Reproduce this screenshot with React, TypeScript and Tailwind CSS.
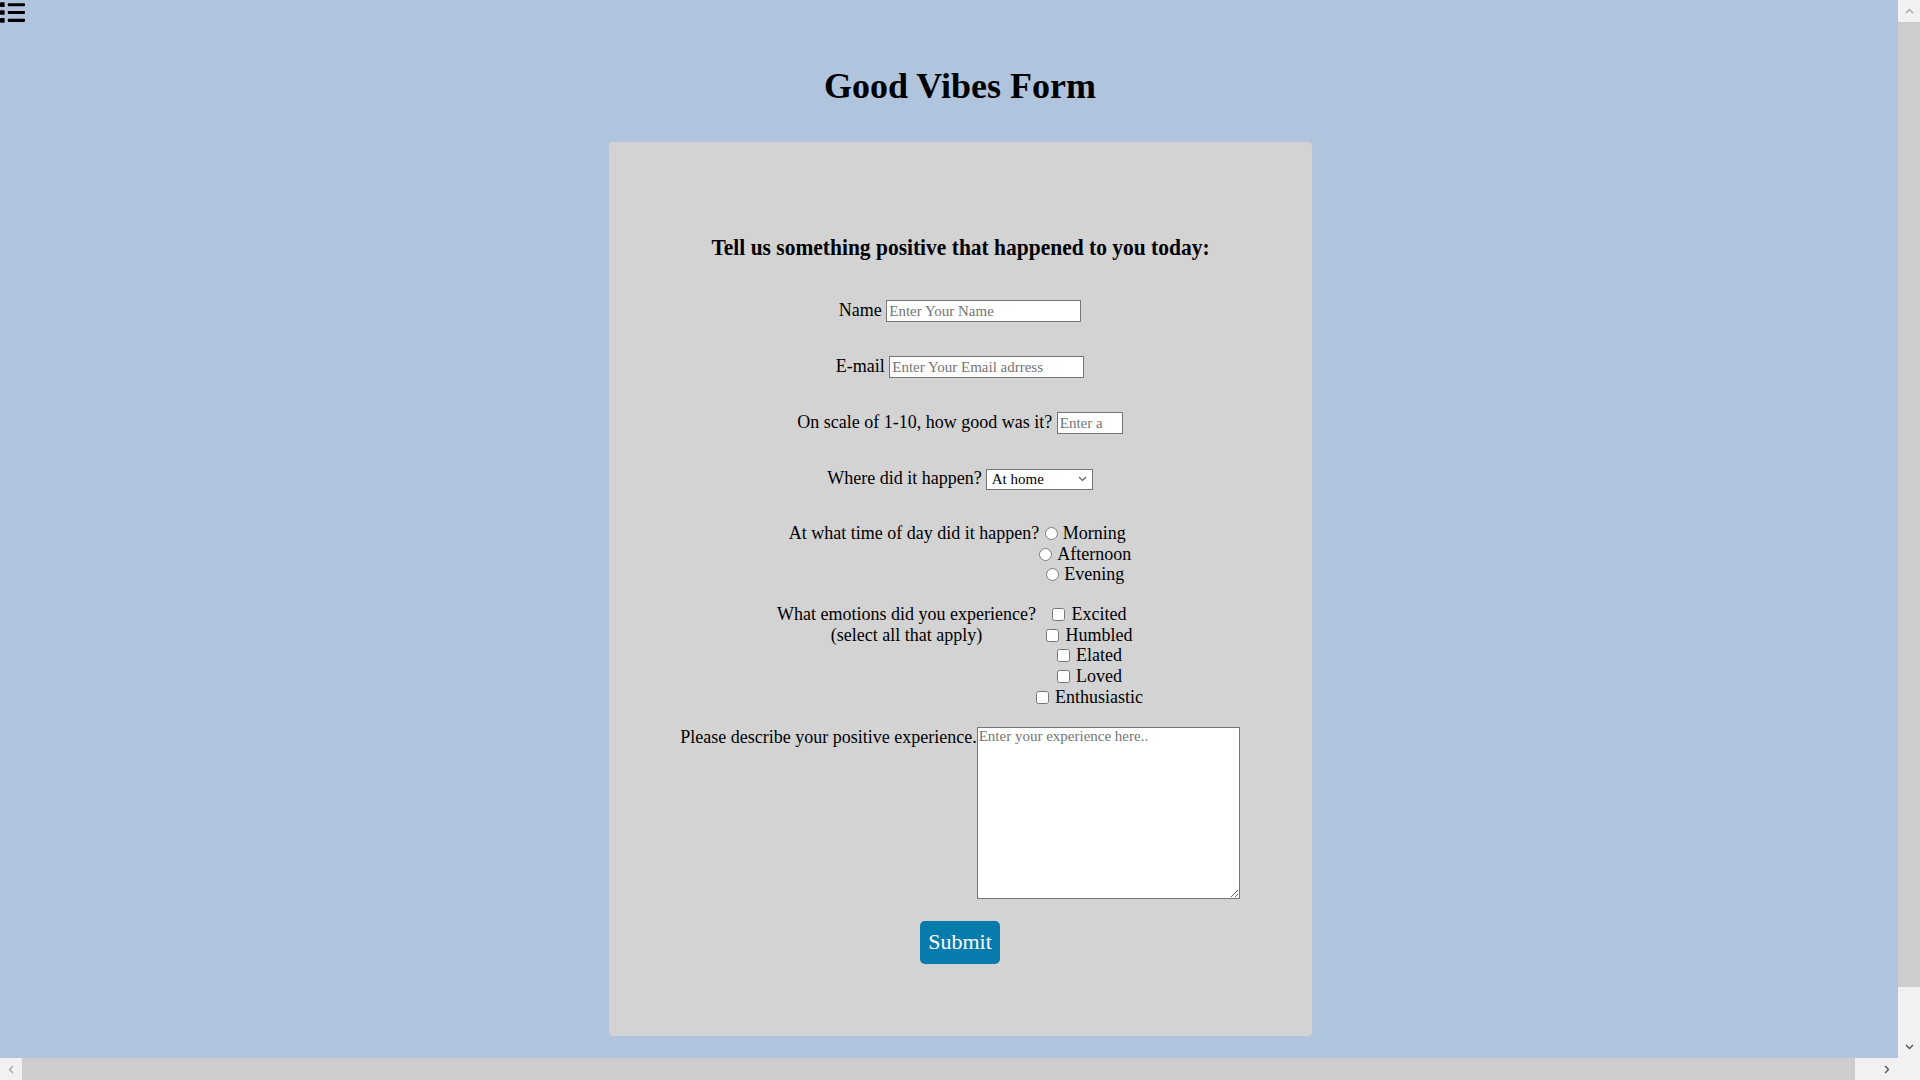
import { FaList } from 'react-icons/fa';

const field =
  'h-[22px] border border-[#767676] bg-white px-[2px] text-[15px] leading-normal placeholder:text-[#757575]';

const times = ['Morning', 'Afternoon', 'Evening'];
const feelings = ['Excited', 'Humbled', 'Elated', 'Loved', 'Enthusiastic'];

// the window's scrollbars (the page is a bit wider and taller than the viewport)
const Scrollbars = () => (
  <>
    <div className="fixed right-0 top-0 flex h-[1058px] w-[22px] flex-col bg-[#f1f1f1]">
      <div className="flex h-[22px] items-center justify-center">
        <svg width="9" height="6" viewBox="0 0 9 6">
          <path d="M1 5l3.5-3.5L8 5" fill="none" stroke="#a3a3a3" strokeWidth="1.3" />
        </svg>
      </div>
      <div className="h-[965px] bg-[#cdcdcd]" />
      <div className="flex-1" />
      <div className="flex h-[22px] items-center justify-center">
        <svg width="9" height="6" viewBox="0 0 9 6">
          <path d="M1 1l3.5 3.5L8 1" fill="none" stroke="#505050" strokeWidth="1.3" />
        </svg>
      </div>
    </div>
    <div className="fixed bottom-0 left-0 flex h-[22px] w-[1898px] bg-[#f1f1f1]">
      <div className="flex w-[22px] items-center justify-center">
        <svg width="6" height="9" viewBox="0 0 6 9">
          <path d="M5 1L1.5 4.5 5 8" fill="none" stroke="#a3a3a3" strokeWidth="1.3" />
        </svg>
      </div>
      <div className="w-[1833px] bg-[#cdcdcd]" />
      <div className="flex-1" />
      <div className="flex w-[22px] items-center justify-center">
        <svg width="6" height="9" viewBox="0 0 6 9">
          <path d="M1 1l3.5 3.5L1 8" fill="none" stroke="#505050" strokeWidth="1.3" />
        </svg>
      </div>
    </div>
    <div className="fixed bottom-0 right-0 size-[22px] bg-[#f1f1f1]" />
  </>
);

const App = () => {
  return (
    <div className="h-screen w-screen overflow-hidden bg-[#b0c4de]">
      <div className="w-[1920px] min-h-[1112px] font-['Liberation_Serif','Times_New_Roman',serif] text-[18px] leading-[1.15] text-black">
        <nav className="h-[25px]">
          <FaList size={25} />
        </nav>

        <h1 className="mt-[41px] text-center text-[36px] font-bold leading-[41px]">Good Vibes Form</h1>

        <form className="mx-auto mt-[35px] flex w-[703px] flex-col items-center rounded-[4px] bg-[#d3d3d3] pt-[92px] pb-[72px]">
          <h3 className="w-full scale-x-[0.895] text-center text-[24px] font-bold leading-[27px]">
            Tell us something positive that happened to you today:
          </h3>

          <div className="mt-[39px] flex h-[22px] items-baseline gap-[4.5px]">
            <label htmlFor="name">Name</label>
            <input id="name" type="text" placeholder="Enter Your Name" className={field + ' w-[195px]'} />
          </div>

          <div className="mt-[34px] flex h-[22px] items-baseline gap-[4.5px]">
            <label htmlFor="email">E-mail</label>
            <input id="email" type="email" placeholder="Enter Your Email adrress" className={field + ' w-[195px]'} />
          </div>

          <div className="mt-[34px] flex h-[22px] items-baseline gap-[4.5px]">
            <label htmlFor="scale">On scale of 1-10, how good was it?</label>
            <input id="scale" type="number" min={1} max={10} placeholder="Enter a number" className={field + ' w-[66px]'} />
          </div>

          <div className="mt-[34px] flex h-[21px] items-baseline gap-[4px]">
            <label htmlFor="where">Where did it happen?</label>
            <span className="relative">
              <select
                id="where"
                defaultValue="home"
                className="h-[21px] w-[107px] appearance-none border border-[#767676] bg-white pl-[5px] text-[15px] text-black"
              >
                <option value="home">At home</option>
                <option value="work">At work</option>
                <option value="school">At school</option>
                <option value="other">Other</option>
              </select>
              <svg
                className="pointer-events-none absolute right-[6px] top-[8px]"
                width="9"
                height="6"
                viewBox="0 0 9 6"
              >
                <path d="M1 1l3.5 3.5L8 1" fill="none" stroke="#5f5f5f" strokeWidth="1.2" />
              </svg>
            </span>
          </div>

          <div className="mt-[34px] flex items-start">
            <span>At what time of day did it happen?</span>
            <div className="flex flex-col items-center">
              {times.map((t) => (
                <label key={t} className="flex h-[20.7px] items-center">
                  <input type="radio" name="time" value={t} className="m-0 mr-[5px] size-[13px]" />
                  {t}
                </label>
              ))}
            </div>
          </div>

          <div className="mt-[19px] flex items-start">
            <p className="text-center">
              What emotions did you experience?
              <br />
              (select all that apply)
            </p>
            <div className="flex flex-col items-center">
              {feelings.map((f) => (
                <label key={f} className="flex h-[20.7px] items-center">
                  <input type="checkbox" value={f} className="m-0 mr-[6px] size-[13px]" />
                  {f}
                </label>
              ))}
            </div>
          </div>

          <div className="mt-[19px] flex items-start">
            <label htmlFor="story">Please describe your positive experience.</label>
            <textarea
              id="story"
              placeholder="Enter your experience here.."
              className="h-[172px] w-[263px] resize border border-[#767676] bg-white px-px text-[15px] leading-[16px] placeholder:text-[#757575]"
            />
          </div>

          <button type="submit" className="mt-[22px] h-[43px] w-[80px] rounded-[5px] bg-[#067bac] text-[22px] text-white">
            Submit
          </button>
        </form>
      </div>
      <Scrollbars />
    </div>
  );
};

export default App;
